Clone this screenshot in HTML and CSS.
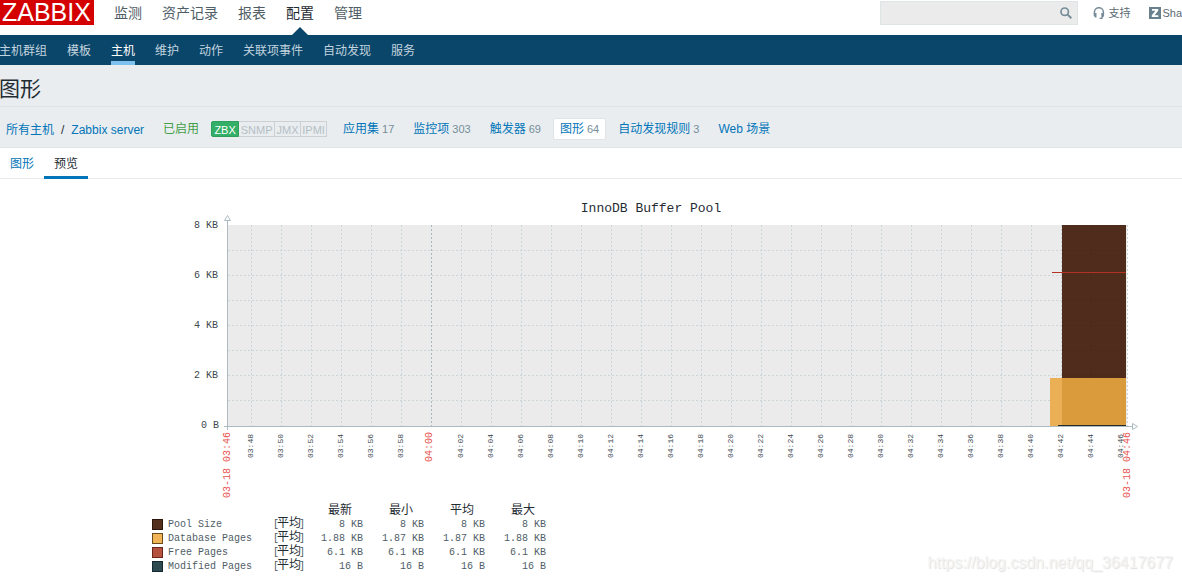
FILE: index.html
```html
<!DOCTYPE html>
<html lang="zh-CN">
<head>
<meta charset="utf-8">
<title>图形</title>
<link rel="stylesheet" href="styles.css">
</head>
<body>
<header class="topbar">
  <a class="logo" href="#">ZABBIX</a>
  <nav class="menu">
    <a href="#">监测</a>
    <a href="#">资产记录</a>
    <a href="#">报表</a>
    <a class="selected" href="#">配置</a>
    <a href="#">管理</a>
  </nav>
  <form class="search">
    <input type="text" aria-label="搜索">
    <button type="button" aria-label="搜索">
      <svg width="12" height="12" viewBox="0 0 12 12"><circle cx="4.7" cy="4.7" r="3.7" fill="none" stroke="#768d99" stroke-width="1.7"/><path d="M7.4 7.4L11.3 11.3" stroke="#768d99" stroke-width="2"/></svg>
    </button>
  </form>
  <a class="tool" href="#">
    <svg width="12" height="12" viewBox="0 0 12 12"><path d="M1.400 6.500V5.200a4.500 4.500 0 0 1 9 0v1.300" fill="none" stroke="#768d99" stroke-width="1.500"/><path d="M.7 6h2.800v4.500H2.200L.7 8.800zM8.300 6h2.800v3l-1.500 1.700v1.200H6.500v-1.200h1.800z" fill="#768d99"/></svg>
    支持
  </a>
  <a class="tool share" href="#">
    <svg width="12" height="12" viewBox="0 0 12 12"><rect width="12" height="12" fill="#69808d"/><path d="M3 2h6.200v1.700L5.600 8.200h3.700V10H2.800V8.300l3.600-4.500H3z" fill="#fff"/></svg>
    Sha
  </a>
</header>
<nav class="submenu">
  <a href="#">主机群组</a>
  <a href="#">模板</a>
  <a class="selected" href="#">主机</a>
  <a href="#">维护</a>
  <a href="#">动作</a>
  <a href="#">关联项事件</a>
  <a href="#">自动发现</a>
  <a href="#">服务</a>
</nav>
<h1 class="title">图形</h1>
<div class="filter">
  <div class="crumbs"><a href="#">所有主机</a><span>/</span><a href="#">Zabbix server</a></div>
  <span class="enabled">已启用</span>
  <div class="status"><span class="on">ZBX</span><span>SNMP</span><span>JMX</span><span>IPMI</span></div>
  <nav class="objects">
    <a href="#">应用集<span class="count">17</span></a>
    <a href="#">监控项<span class="count">303</span></a>
    <a href="#">触发器<span class="count">69</span></a>
    <a class="selected" href="#">图形<span class="count">64</span></a>
    <a href="#">自动发现规则<span class="count">3</span></a>
    <a href="#">Web 场景</a>
  </nav>
</div>
<nav class="tabs">
  <a href="#">图形</a>
  <a class="selected" href="#">预览</a>
</nav>
<main>
  <svg class="chart" viewBox="0 179 1182 324" role="img" aria-label="InnoDB Buffer Pool">
    <text class="chart-title" x="651" y="212" text-anchor="middle">InnoDB Buffer Pool</text>
    <rect x="228" y="225" width="899" height="201" fill="#ebebeb"/>
    <g stroke="#ccd5da" stroke-dasharray="2 2">
      <path d="M228 250.500H1127M228 275.500H1127M228 300.500H1127M228 325.500H1127M228 350.500H1127M228 375.500H1127M228 400.500H1127"/>
      <path d="M251.500 225V426M281.500 225V426M311.500 225V426M341.500 225V426M371.500 225V426M401.500 225V426M461.500 225V426M491.500 225V426M521.500 225V426M551.500 225V426M581.500 225V426M611.500 225V426M641.500 225V426M671.500 225V426M701.500 225V426M731.500 225V426M761.500 225V426M791.500 225V426M821.500 225V426M851.500 225V426M881.500 225V426M911.500 225V426M941.500 225V426M971.500 225V426M1001.500 225V426M1031.500 225V426M1061.500 225V426M1127.500 225V426"/>
      <path d="M431.500 225V426" stroke="#acb7bd"/>
    </g>
    <rect x="1062" y="225" width="64" height="153" fill="#4f2c1b"/>
    <g stroke="#4a2919" stroke-dasharray="2 2">
      <path d="M1091.500 225V378M1121.500 225V378M1062 250.500H1126M1062 275.500H1126M1062 300.500H1126M1062 325.500H1126M1062 350.500H1126M1062 375.500H1126"/>
    </g>
    <rect x="1050" y="378" width="12" height="48" fill="#ebb056"/>
    <rect x="1062" y="378" width="64" height="48" fill="#d99b3b"/>
    <path d="M1052 272.500H1126" stroke="#b23323"/>
    <path d="M1058 425.500H1126" stroke="#232b2b"/>
    <g fill="none" stroke="#acbbc2">
      <path d="M227.500 220V430M224 426.500H1132"/>
      <path d="M224.500 220.500L227.500 215.500L230.500 220.500Z" fill="#fff"/>
      <path d="M1132.500 423.500L1137.500 426.500L1132.500 429.500Z" fill="#fff"/>
    </g>
    <g class="scale" text-anchor="end">
      <text x="218" y="228">8 KB</text>
      <text x="218" y="278">6 KB</text>
      <text x="218" y="328">4 KB</text>
      <text x="218" y="378">2 KB</text>
      <text x="219" y="428">0 B</text>
    </g>
    <g class="times" transform="rotate(-90)">
      <text x="-458" y="253">03:48</text>
      <text x="-458" y="283">03:50</text>
      <text x="-458" y="313">03:52</text>
      <text x="-458" y="343">03:54</text>
      <text x="-458" y="373">03:56</text>
      <text x="-458" y="403">03:58</text>
      <text x="-458" y="463">04:02</text>
      <text x="-458" y="493">04:04</text>
      <text x="-458" y="523">04:06</text>
      <text x="-458" y="553">04:08</text>
      <text x="-458" y="583">04:10</text>
      <text x="-458" y="613">04:12</text>
      <text x="-458" y="643">04:14</text>
      <text x="-458" y="673">04:16</text>
      <text x="-458" y="703">04:18</text>
      <text x="-458" y="733">04:20</text>
      <text x="-458" y="763">04:22</text>
      <text x="-458" y="793">04:24</text>
      <text x="-458" y="823">04:26</text>
      <text x="-458" y="853">04:28</text>
      <text x="-458" y="883">04:30</text>
      <text x="-458" y="913">04:32</text>
      <text x="-458" y="943">04:34</text>
      <text x="-458" y="973">04:36</text>
      <text x="-458" y="1003">04:38</text>
      <text x="-458" y="1033">04:40</text>
      <text x="-458" y="1063">04:42</text>
      <text x="-458" y="1093">04:44</text>
      <text x="-458" y="1123">04:46</text>
      <g class="major">
        <text x="-498" y="230">03-18 03:46</text>
        <text x="-462" y="432">04:00</text>
        <text x="-498" y="1130">03-18 04:46</text>
      </g>
    </g>
  </svg>
  <table class="legend">
    <thead>
      <tr><td class="name"></td><td class="fn"></td><th class="last">最新</th><th>最小</th><th>平均</th><th>最大</th></tr>
    </thead>
    <tbody>
      <tr><th><i class="swatch pool"></i>Pool Size</th><td class="fn">[<b>平均</b>]</td><td class="last">8 KB</td><td>8 KB</td><td>8 KB</td><td>8 KB</td></tr>
      <tr><th><i class="swatch database"></i>Database Pages</th><td class="fn">[<b>平均</b>]</td><td class="last">1.88 KB</td><td>1.87 KB</td><td>1.87 KB</td><td>1.88 KB</td></tr>
      <tr><th><i class="swatch free"></i>Free Pages</th><td class="fn">[<b>平均</b>]</td><td class="last">6.1 KB</td><td>6.1 KB</td><td>6.1 KB</td><td>6.1 KB</td></tr>
      <tr><th><i class="swatch modified"></i>Modified Pages</th><td class="fn">[<b>平均</b>]</td><td class="last">16 B</td><td>16 B</td><td>16 B</td><td>16 B</td></tr>
    </tbody>
  </table>
</main>
<div class="watermark">https://blog.csdn.net/qq_36417677</div>
</body>
</html>
```
FILE: styles.css
```css
* { box-sizing: border-box; }
body {
  margin: 0;
  background: #fff;
  color: #1f2c33;
  font: 12px/18px "Liberation Sans", "Noto Sans CJK SC", sans-serif;
  white-space: nowrap;
}
a { color: #0275b8; text-decoration: none; }
svg { display: block; flex: none; }

.topbar { display: flex; align-items: flex-start; height: 35px; }
.logo {
  width: 94px;
  height: 25px;
  padding-left: 2px;
  background: #d40000;
  color: #fff;
  font-size: 25px;
  line-height: 25px;
}
.menu { display: flex; gap: 20px; margin-left: 20px; }
.menu a {
  position: relative;
  height: 35px;
  color: #4f5d66;
  font-size: 14px;
  line-height: 27px;
}
.menu .selected { color: #1f2c33; }
.menu .selected::after {
  content: "";
  position: absolute;
  left: 50%;
  bottom: 0;
  margin-left: -8px;
  border: 8px solid transparent;
  border-top: 0;
  border-bottom-color: #0a466a;
}
.search {
  display: flex;
  align-items: center;
  width: 198px;
  height: 24px;
  margin: 1px 15px 0 auto;
  padding-right: 5px;
  border: 1px solid #dfe4e7;
  background: #ebebeb;
}
.search input { flex: 1; min-width: 0; height: 20px; border: 0; background: none; outline: 0; }
.search button { padding: 0; border: 0; background: none; }
.tool {
  display: flex;
  align-items: center;
  gap: 3px;
  height: 25px;
  margin-right: 19px;
  color: #5b6b75;
  font-size: 11px;
}
.share { gap: 1px; margin-right: 0; }

.submenu { display: flex; gap: 20px; height: 30px; margin-left: -1px; background: #0a466a; }
.submenu a { height: 30px; color: #c2d4df; line-height: 32px; }
.submenu .selected { border-bottom: 4px solid #7ec1f0; color: #fff; }

.title {
  height: 42px;
  margin: 0 0 0 -1px;
  border-bottom: 1px solid #dfe4e7;
  background: #e9edf0;
  font-size: 21px;
  font-weight: 400;
  line-height: 48px;
}
.filter {
  display: flex;
  align-items: center;
  height: 41px;
  padding: 4px 0 0 6px;
  border-bottom: 1px solid #dfe4e7;
  background: #e9edf0;
}
.crumbs { display: flex; gap: 7px; padding-top: 2px; }
.enabled { margin: 0 12px 0 19px; color: #429e47; }
.status { display: flex; height: 16px; margin-right: 9px; font-size: 11px; line-height: 17px; }
.status span {
  width: 26px;
  border: 1px solid #ccd0d3;
  border-left: 0;
  color: #b5bec4;
  text-align: center;
}
.status span:nth-child(2) { width: 36px; }
.status .on { width: 28px; border: 1px solid #2f9f5e; border-radius: 2px 0 0 2px; background: #34af67; color: #fff; }
.objects { display: flex; gap: 5px; }
.objects a { height: 22px; padding: 0 6px; border: 1px solid transparent; border-radius: 2px; line-height: 21px; }
.objects .selected { border-color: #dfe4e7; background: #fff; }
.count { margin-left: 3px; color: #768d99; font-size: 11px; }

.tabs { display: flex; height: 31px; border-bottom: 1px solid #ebebeb; }
.tabs a { height: 31px; padding: 0 10px; line-height: 32px; }
.tabs .selected { border-bottom: 3px solid #0275b8; color: #1f2c33; }

.chart { width: 100%; font-family: "Liberation Mono", monospace; fill: #3c474e; }
.chart-title { font-size: 13px; fill: #1f2c33; }
.scale { font-size: 10px; }
.times { font-size: 8px; }
.major { font-size: 10px; fill: #e8524f; }

.legend {
  margin: 1px 0 0 152px;
  border-collapse: collapse;
  color: #4f5d66;
  font: 10px/14px "Liberation Mono", "Noto Sans CJK SC", monospace;
}
.legend tr { height: 14px; }
.legend th, .legend td { width: 61px; padding: 0; font-weight: 400; text-align: right; line-height: 14px; }
.legend thead th { padding-right: 11px; color: #1f2c33; font-size: 12px; }
.legend tbody th { display: flex; align-items: center; gap: 5px; height: 14px; text-align: left; }
.legend tbody th, .legend .name { width: 121px; }
.legend .fn { width: 32px; text-align: left; }
.legend .last { width: 58px; }
.legend b { margin: 0 -2px; color: #1f2c33; font-size: 12px; font-weight: 400; line-height: 10px; }
.swatch { width: 11px; height: 11px; margin-bottom: 2px; border: 1px solid #1f2c33; }
.pool { border-color: #2b160b; background: #522e1c; }
.database { border-color: #6b4a1a; background: #f0b456; }
.free { border-color: #6b241a; background: #b4513f; }
.modified { border-color: #14292e; background: #2d4a50; }

.watermark {
  position: absolute;
  right: 9px;
  bottom: 9px;
  color: #f4f4f4;
  font-size: 16px;
  text-shadow: 1px 1px 1px #e0e0e0;
}
```
